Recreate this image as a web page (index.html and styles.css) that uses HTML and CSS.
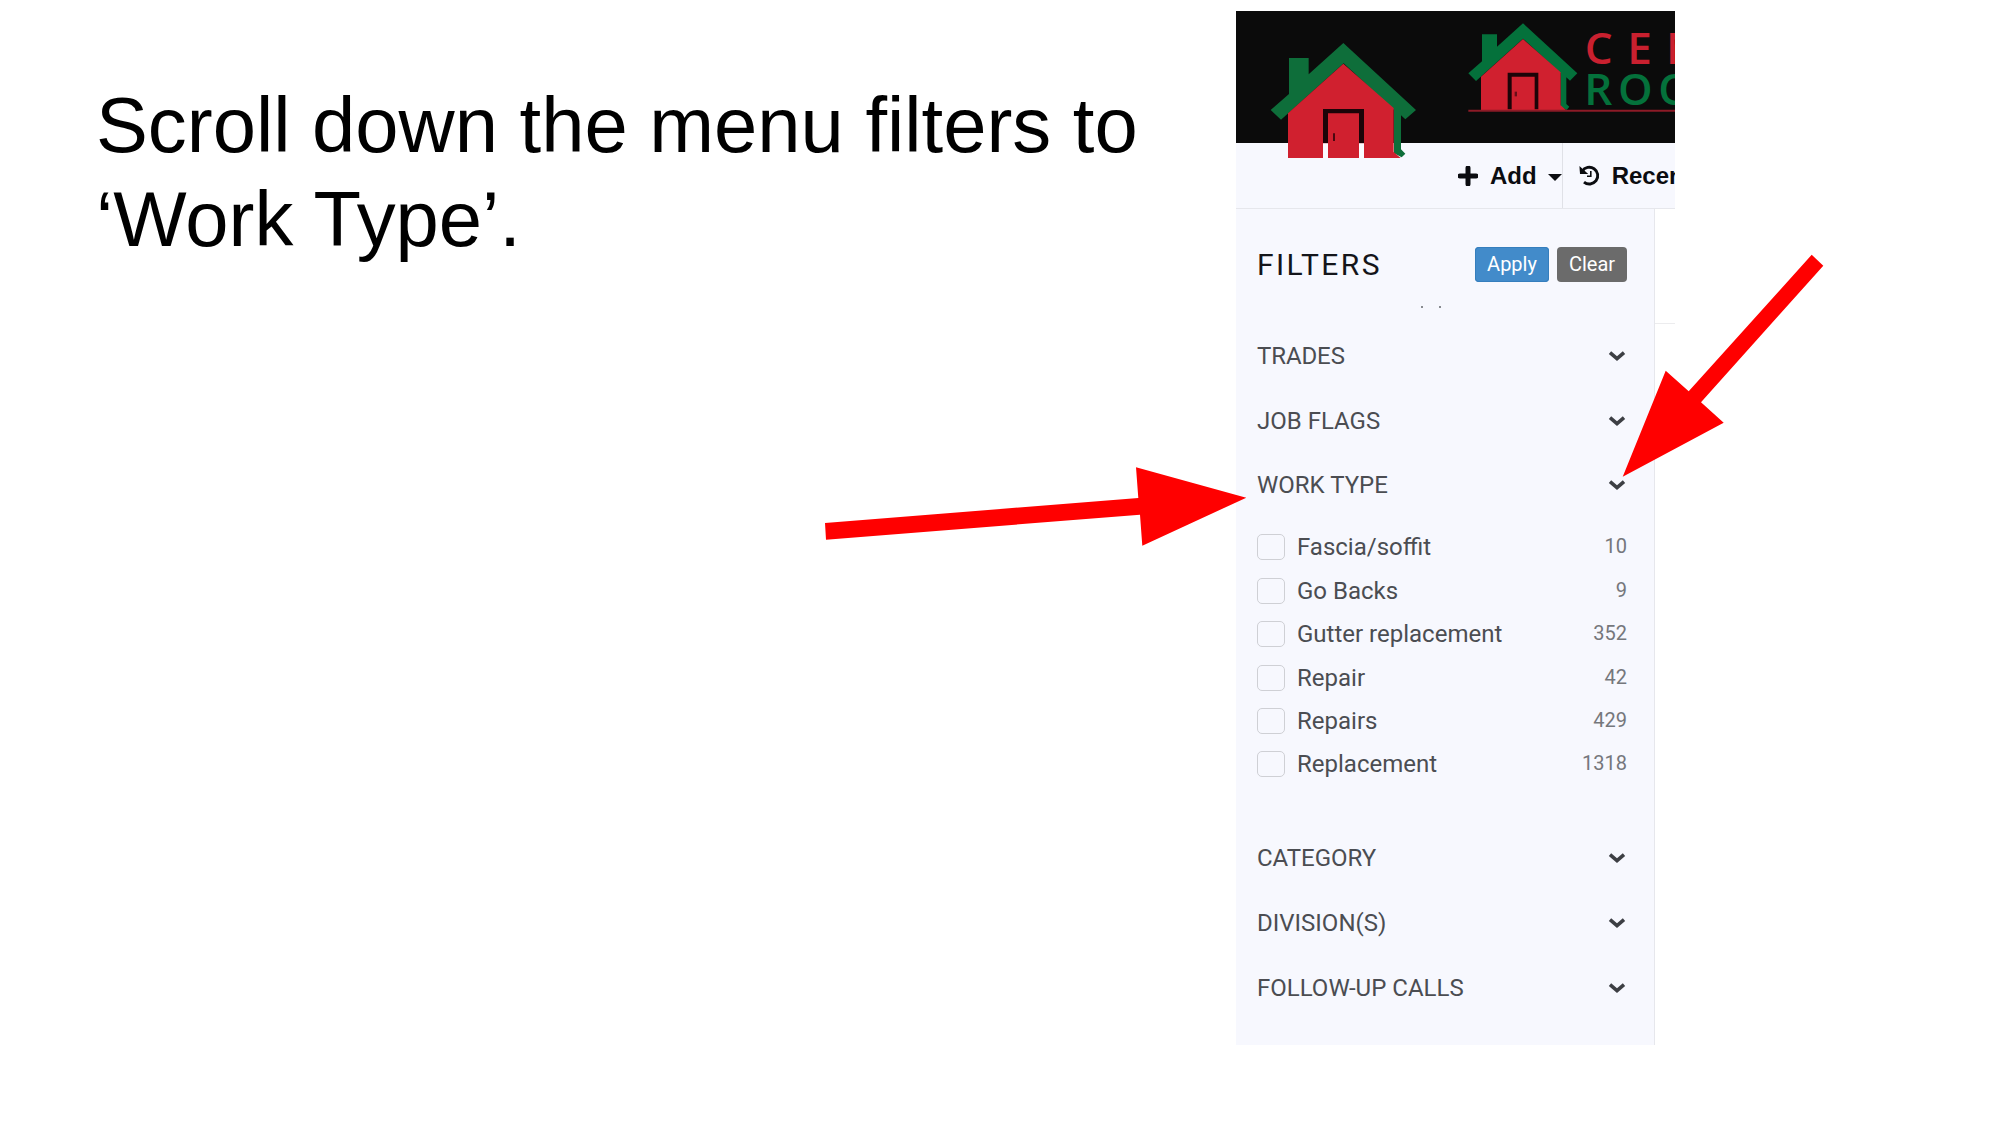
FILE: index.html
```html
<!DOCTYPE html>
<html lang="en">
<head>
<meta charset="utf-8">
<title>Work Type filters</title>
<link rel="stylesheet" href="styles.css">
</head>
<body>
<svg class="defs" width="0" height="0">
  <symbol id="chevron" viewBox="0 0 18 12"><path d="M2 2.6 9 8.6 16 2.6" fill="none" stroke="#3d3f44" stroke-width="3.6"/></symbol>
</svg>
<main class="slide">
  <h1 class="title">Scroll down the menu filters to<br>‘Work Type’.</h1>
  <section class="app">
    <header class="brand">
      <svg class="brand-art" viewBox="18 33 1317 447">
        <g>
          <path fill="#0e6e3a" d="M340 129 558 330 526 358 513 346V448L526 461 515 472 492 460V330L341 190 153 359 122 330 177 282V174H236V223Z"/>
          <path fill="#d0202f" d="M340 191 491 324V456L512 474H174V340Z"/>
          <path fill="#1c0408" d="M279 327H402V430H387V340H294V430H279Z"/>
          <path fill="#fafbff" d="M279 430H294V475H279ZM387 430H402V475H387Z"/>
          <path fill="#4b0710" d="M309 400H315V423H309Z"/>
        </g>
        <g>
          <path fill="#04713b" d="M879 70 1042 220 1020 242 1009 232V312L1018 320 1010 330 992 320V220L879 116 738 243 715 220 756 184V103H801V140Z"/>
          <path fill="#d0202f" d="M879 117 992 217V316L1008 330H753V230Z"/>
          <path fill="#1c0408" d="M833 218H925V328H914V230H845V328H833Z"/>
          <path fill="#6b0d18" d="M854 275H861V289H854Z"/>
          <path fill="#8d1b27" d="M715 329H1335V335H715Z"/>
        </g>
        <text class="brand-text red" x="1064 1192 1308" y="191">CEN</text>
        <text class="brand-text green" x="1063 1164 1285" y="316">ROO</text>
      </svg>
    </header>
    <nav class="toolbar">
      <div class="tool add">
        <svg width="20" height="20" viewBox="0 0 20 20"><path d="M10 2V18M2 10H18" stroke="#0b0c10" stroke-width="5" stroke-linecap="round"/></svg>
        <span>Add</span>
        <svg class="caret" width="14" height="7" viewBox="0 0 14 7"><path d="M0 0H14L7 7Z" fill="#0b0c10"/></svg>
      </div>
      <div class="tool recent">
        <svg width="22" height="21" viewBox="0 0 22 21"><path d="M3.2 6.2A8.4 8.4 0 1 1 5 17.1" fill="none" stroke="#0b0c10" stroke-width="2.9"/><path d="M.4 1 1 9H9.2Z" fill="#0b0c10"/><path d="M11.8 6V11.3H8" fill="none" stroke="#0b0c10" stroke-width="1.6"/></svg>
        <span>Recent</span>
      </div>
    </nav>
    <div class="body">
      <aside class="filters">
        <div class="filters-head">
          <h2>FILTERS</h2>
          <span class="btn apply">Apply</span><span class="btn clear">Clear</span>
        </div>
        <div class="remnant"><i></i><i></i></div>
        <div class="group"><span style="letter-spacing:-.1px">TRADES</span><svg><use href="#chevron"/></svg></div>
        <div class="group"><span>JOB FLAGS</span><svg><use href="#chevron"/></svg></div>
        <div class="group"><span>WORK TYPE</span><svg><use href="#chevron"/></svg></div>
        <ul class="options">
          <li><i class="box"></i><span>Fascia/soffit</span><b>10</b></li>
          <li><i class="box"></i><span>Go Backs</span><b>9</b></li>
          <li><i class="box"></i><span>Gutter replacement</span><b>352</b></li>
          <li><i class="box"></i><span>Repair</span><b>42</b></li>
          <li><i class="box"></i><span>Repairs</span><b>429</b></li>
          <li><i class="box"></i><span>Replacement</span><b>1318</b></li>
        </ul>
        <div class="group"><span>CATEGORY</span><svg><use href="#chevron"/></svg></div>
        <div class="group"><span>DIVISION(S)</span><svg><use href="#chevron"/></svg></div>
        <div class="group"><span>FOLLOW-UP CALLS</span><svg><use href="#chevron"/></svg></div>
      </aside>
      <div class="content"></div>
    </div>
  </section>
  <svg class="arrows" viewBox="0 0 2000 1125">
    <path d="M825 523 1138.3 498 1136 467.3 1246.3 497.7 1142.3 545.7 1140 514.7 826 539.7Z"/>
    <path d="M1811.7 254.7 1823.3 265.7 1701 402.3 1723.7 422.7 1622.7 476.7 1665.7 370.7 1688.7 391.3Z"/>
  </svg>
</main>
</body>
</html>
```
FILE: styles.css
```css
* { box-sizing: border-box; }
body { margin: 0; background: #fff; }
.defs { position: absolute; }
.slide {
  position: relative;
  display: grid;
  grid-template-columns: 1140px 439px;
  align-items: start;
  width: 2000px;
  height: 1125px;
  padding: 11px 0 0 96px;
  overflow: hidden;
}
.title {
  margin: 67px 0 0;
  font: 400 77.78px/94.3px "Liberation Sans", Arial, sans-serif;
  color: #000;
  white-space: nowrap;
}
.app {
  height: 1034px;
  overflow: hidden;
  font-family: Roboto, sans-serif;
}
.brand {
  position: relative;
  height: 132px;
  background: #0b0b0b;
}
.brand-art {
  position: absolute;
  top: 0;
  left: 0;
  width: 439px;
  height: 149px;
}
.brand-text { font: 600 132px "Open Sans", sans-serif; }
.red { fill: #c9202f; }
.green { fill: #04713b; }
.toolbar {
  display: flex;
  height: 66px;
  background: #f7f8fe;
  border-bottom: 1px solid #e6e7ec;
  font: 700 24px/64px "Liberation Sans", Arial, sans-serif;
  color: #0b0c10;
}
.tool { display: flex; align-items: center; white-space: nowrap; }
.tool svg { flex: none; }
.add { width: 340px; padding-left: 222px; border-right: 1px solid #e0e1e7; }
.add span { margin: 0 11px 0 12px; }
.add .caret { margin-top: 3px; }
.recent { padding-left: 16px; }
.recent span { margin-left: 11px; }
.body { display: flex; height: 836px; }
.filters {
  width: 419px;
  padding: 0 27px 0 21px;
  background: #f7f8fe;
  border-right: 1px solid #e6e7ec;
}
.content { flex: 1; height: 115px; border-bottom: 1px solid #ececee; }
.filters-head { display: flex; align-items: center; height: 110px; }
.filters-head h2 {
  margin: 0 auto 0 0;
  font-size: 30px;
  font-weight: 400;
  letter-spacing: 2.4px;
  color: #14151a;
}
.btn {
  height: 35px;
  border-radius: 4px;
  font-size: 20px;
  line-height: 35px;
  text-align: center;
  color: #fff;
}
.apply { width: 74px; margin-right: 8px; background: #428bca; box-shadow: inset 0 0 0 1px #357ebd; }
.clear { width: 70px; background: #6b6b6b; }
.remnant { display: flex; gap: 16px; height: 7px; margin-bottom: -9px; padding: 0 0 0 164px; transform: translateY(-14px); }
.remnant i { width: 2px; height: 2px; margin-top: 1px; background: #888b90; }
.remnant { transform: none; margin: -14px 0 12px; }
.group {
  display: flex;
  align-items: center;
  justify-content: space-between;
  height: 64.6px;
  font-size: 24px;
  color: #4b4d52;
}
.filters .remnant + .group { margin-top: 0; }
.group svg { width: 18px; height: 12px; margin-right: 1px; }
.options { margin: 8px 0 40px; padding: 0; list-style: none; }
.options li {
  display: flex;
  align-items: center;
  height: 43.4px;
  font-size: 24px;
  color: #4b4d52;
}
.box { width: 28px; height: 26px; margin-right: 12px; border: 1.5px solid #cfd0d5; border-radius: 5px; }
.options b { margin: -2px 0 0 auto; font-size: 20px; font-weight: 400; color: #75777c; }
.arrows { position: absolute; inset: 0; width: 2000px; height: 1125px; fill: #f00; }
```
